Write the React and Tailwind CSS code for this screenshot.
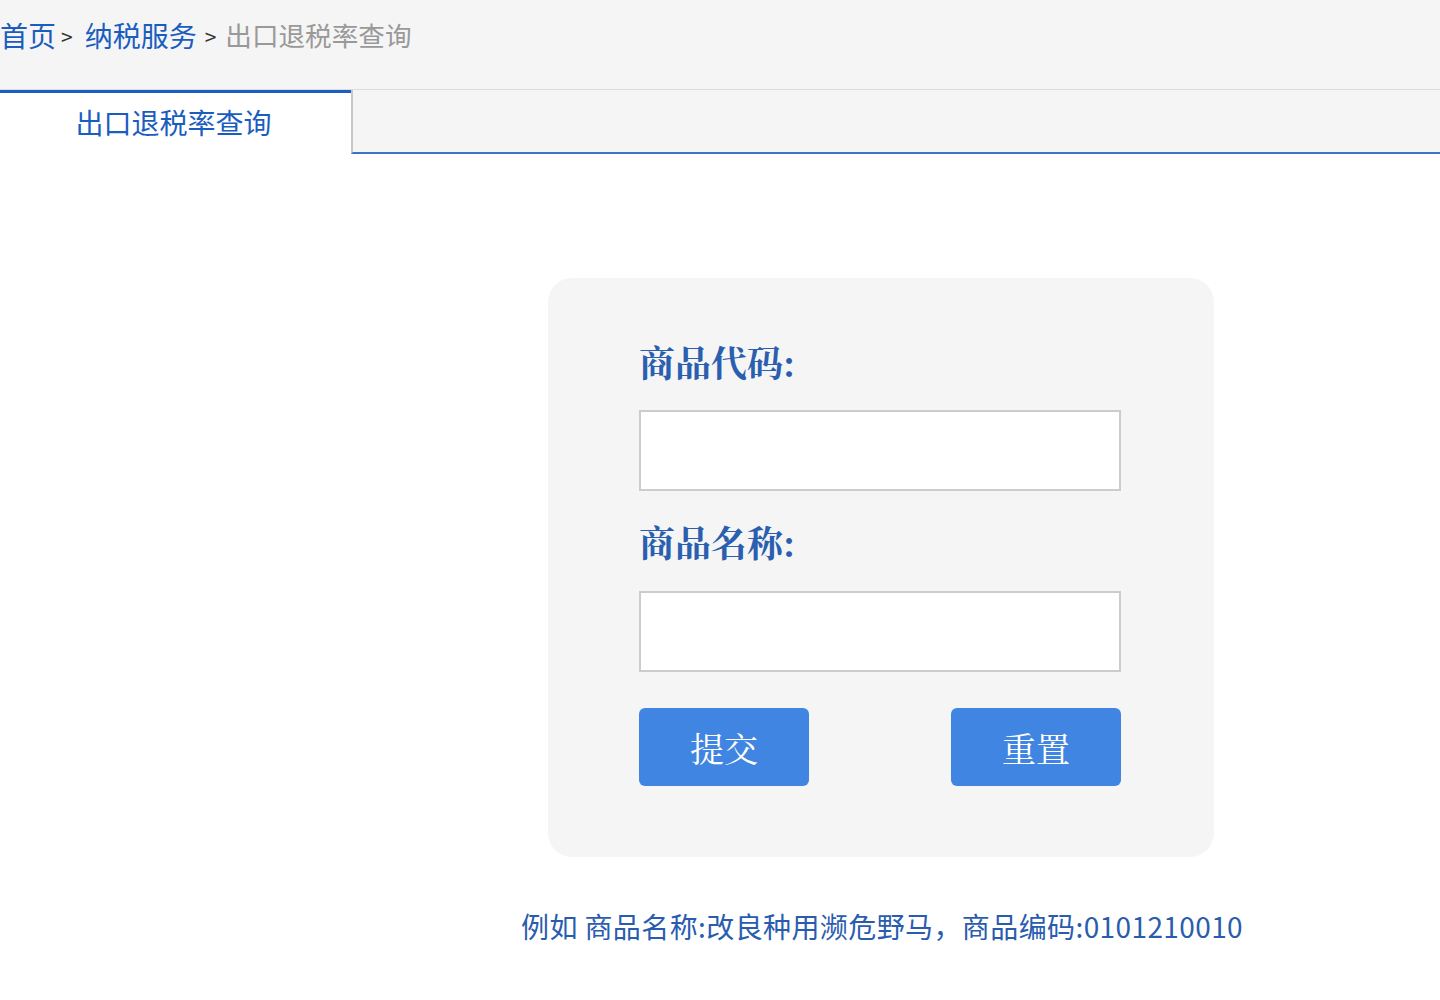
import React from "react";

const sans = { fontFamily: '"Noto Sans CJK SC", "Noto Sans", sans-serif' };
const serif = { fontFamily: '"Noto Serif CJK SC", "Liberation Serif", "Noto Sans CJK SC", serif' };

export default function App() {
  return (
    <div className="min-h-[1000px] w-[1440px] bg-white" style={sans}>
      <div className="h-[90px] bg-[#f5f5f5] border-b border-[#dcdcdc] flex items-start">
        <div className="ml-0 mt-[17px] flex items-center h-[36px] whitespace-nowrap">
          <span className="text-[28px] leading-[36px] text-[#1a5dbf]">首页</span>
          <span className="text-[21px] text-[#333] ml-[5px] mr-[12px] mt-[4px]">&gt;</span>
          <span className="text-[28px] leading-[36px] text-[#1a5dbf]">纳税服务</span>
          <span className="text-[21px] text-[#333] ml-[8px] mr-[9px] mt-[4px]">&gt;</span>
          <span className="text-[26.6px] leading-[36px] text-[#999]">出口退税率查询</span>
        </div>
      </div>
      <div className="flex h-[64px]">
        <div className="w-[351px] bg-white border-t-[3px] border-[#1a5fbf] flex items-center justify-center">
          <span className="text-[28px] text-[#1a5dbf] leading-[36px] ml-[-4px] mt-[-4px]">出口退税率查询</span>
        </div>
        <div className="flex-1 bg-[#f5f5f5] border-l-2 border-l-[#c8c8c8] border-b-2 border-b-[#3a74c9]"></div>
      </div>

      <div className="ml-[548px] mt-[124px] w-[666px] rounded-[24px] bg-[#f5f5f5] pl-[91px] pt-[66px] pb-[71px]">
        <div className="text-[36px] leading-[36px] font-bold text-[#2a5fb0]" style={serif}>商品代码:</div>
        <input className="mt-[30px] block w-[482px] h-[81px] bg-white border-2 border-[#cccccc] outline-none" />
        <div className="mt-[33px] text-[36px] leading-[36px] font-bold text-[#2a5fb0]" style={serif}>商品名称:</div>
        <input className="mt-[31px] block w-[482px] h-[81px] bg-white border-2 border-[#cccccc] outline-none" />
        <div className="mt-[36px] w-[482px] flex justify-between">
          <button className="w-[170px] h-[78px] rounded-[6px] bg-[#4085e1] text-white text-[34px] flex items-center justify-center" style={serif}>提交</button>
          <button className="w-[170px] h-[78px] rounded-[6px] bg-[#4085e1] text-white text-[34px] flex items-center justify-center" style={serif}>重置</button>
        </div>
      </div>

      <div className="mt-[53px] ml-[521px] text-[28px] leading-[32px] tracking-[0.4px] text-[#2a5cae] whitespace-nowrap">
        例如 商品名称:改良种用濒危野马，商品编码:0101210010
      </div>
    </div>
  );
}
